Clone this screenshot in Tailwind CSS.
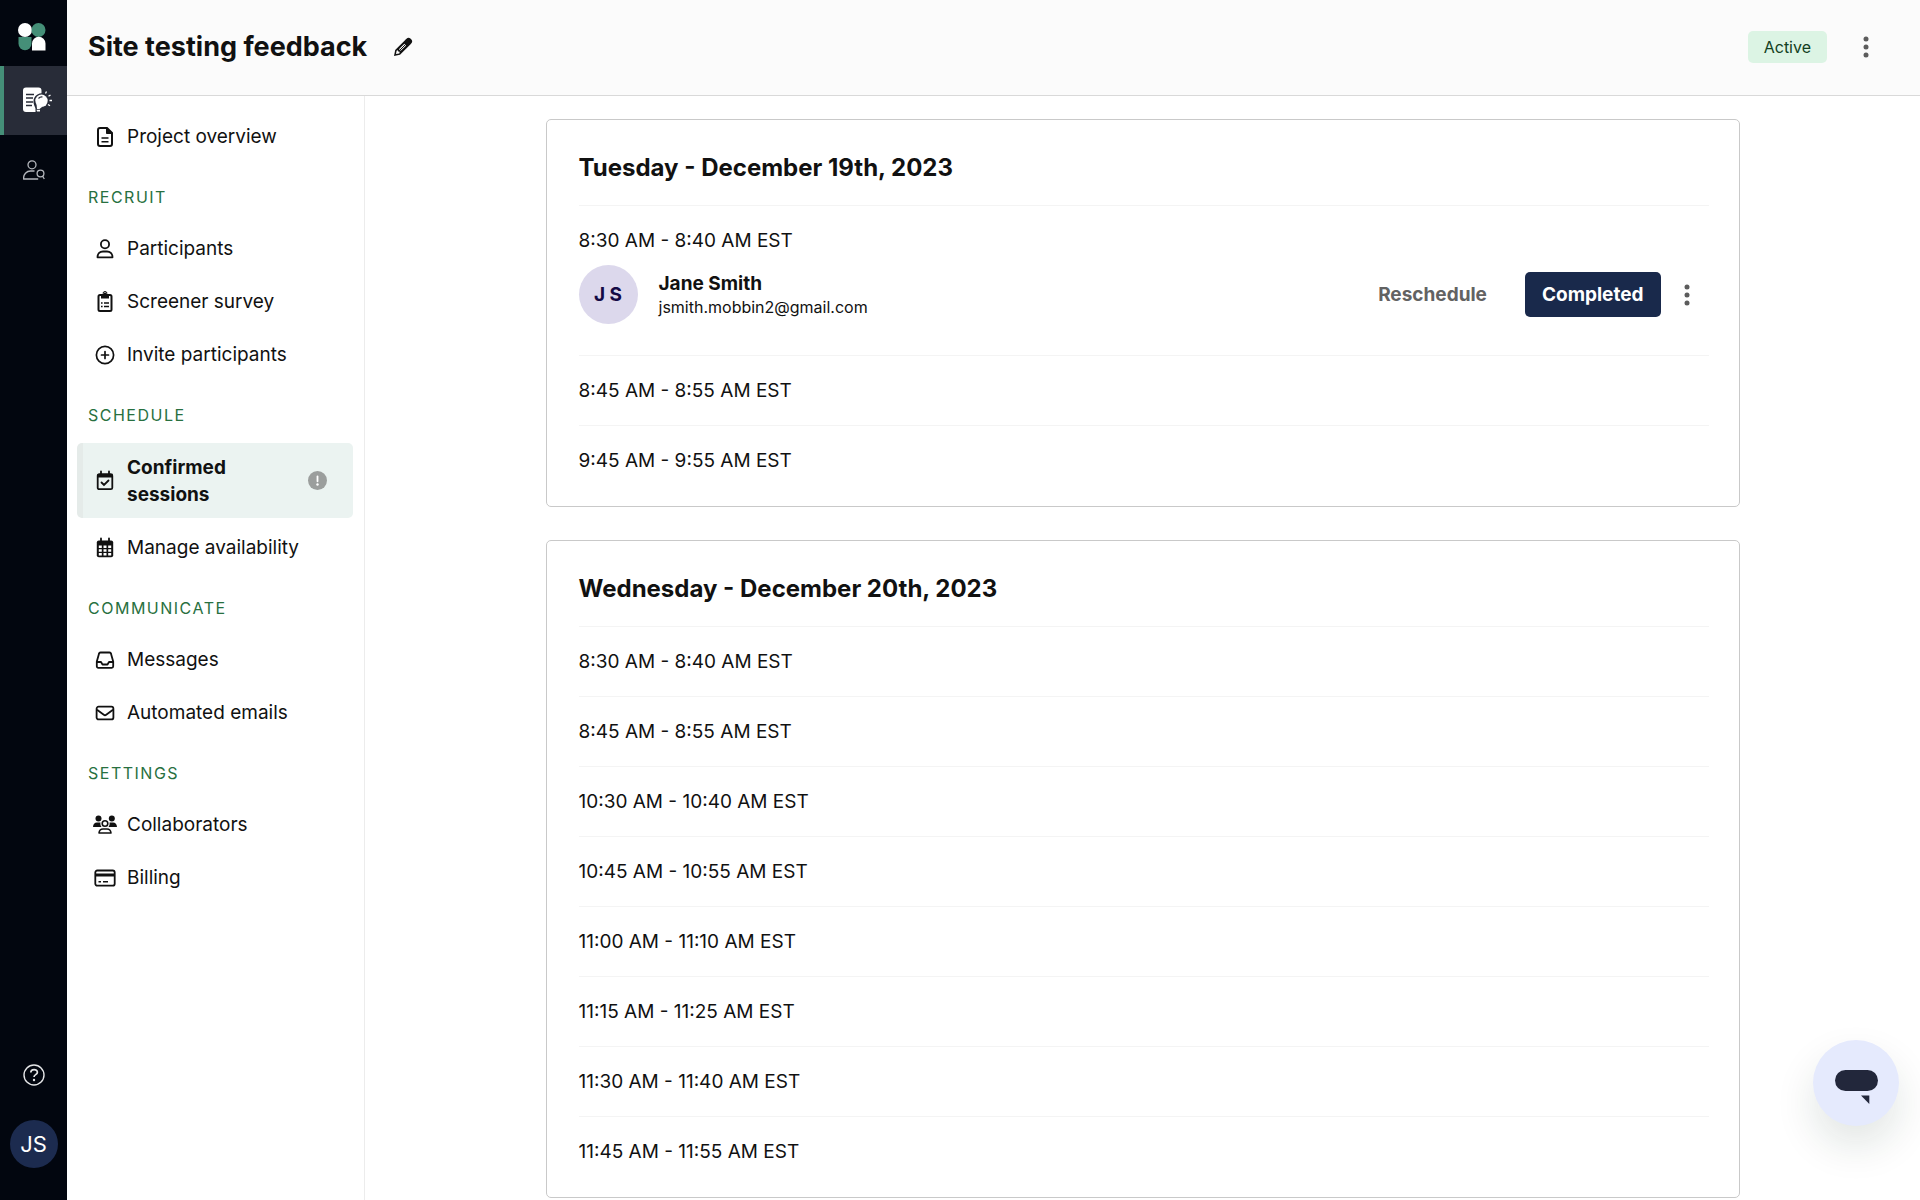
<!DOCTYPE html>
<html lang="en">
    <head>
        <meta charset="UTF-8" />
        <meta name="viewport" content="width=device-width, initial-scale=1.0" />
        <title>Site testing feedback</title>
        <script src="https://cdn.jsdelivr.net/npm/@tailwindcss/browser@4"></script>
    </head>
    <body class="flex h-screen overflow-hidden bg-white font-['Inter','Liberation_Sans',sans-serif] text-[19px] leading-[27px] text-[#111]">
        <!-- App rail -->
        <nav class="flex w-[67px] shrink-0 flex-col bg-[#02060f]" aria-label="Main">
            <a href="#" class="flex h-[66px] items-center justify-center pt-2 pr-1" aria-label="Home">
                <svg class="size-7" viewBox="0 0 28 28">
                    <circle cx="7" cy="7" r="7" fill="#fff" />
                    <circle cx="20.5" cy="7" r="7" fill="#458f78" />
                    <path d="M.5 14h13v6.500a6.500 6.800 0 0 1-13 0z" fill="#458f78" />
                    <path d="M14 27.500v-7a6.700 6.700 0 0 1 13.500 0v7z" fill="#fff" />
                </svg>
            </a>
            <a href="#" class="flex h-[69px] items-center border-l-4 border-[#458f78] bg-[#282c38] pb-[2px] pl-[19px] text-white" aria-label="Projects">
                <svg class="h-[26px] w-[29px] shrink-0" viewBox="0 0 29 26" fill="none">
                    <path d="M3 .5h12.500a3 3 0 0 1 3 3V25H3a3 3 0 0 1-3-3V3.500a3 3 0 0 1 3-3z" fill="#fff" />
                    <path d="M3 7.500h8M3 11h7M3 15h7M3 18.500h6" stroke="#282c38" stroke-width="1.300" />
                    <path d="M12.500 25v-3c0-2-2-3.500-2-7.500a8 8 0 0 1 12-7V22l-4 4z" fill="#282c38" />
                    <circle cx="18.500" cy="13.800" r="6.200" fill="#fff" />
                    <path d="M13.500 17l5.500 3-2.500 2h-2.500z" fill="#fff" />
                    <path d="M13.500 22.800h3.500v1.700h-3z" fill="#fff" />
                    <path d="M15.500 11.500a4.500 4.500 0 0 1 4-1.500" stroke="#282c38" stroke-width="1.200" />
                    <path d="M22.500 6.500l1-2M25.500 9.300l2-1.300M26.500 13.500h2.500M25 17.500l2 1.300" stroke="#fff" stroke-width="1.300" />
                </svg>
            </a>
            <a href="#" class="flex h-[70px] items-center justify-center text-[#b4b7bd]" aria-label="People">
                <svg class="h-5 w-[22px]" viewBox="0 0 22 20" fill="none" stroke="currentColor" stroke-width="1.300">
                    <circle cx="9" cy="4.800" r="4" />
                    <path d="M11.500 11H8a7 7 0 0 0-7.300 8h14.500" />
                    <circle cx="17.500" cy="13.500" r="3.400" />
                    <path d="M19.500 16l1.800 3" />
                </svg>
            </a>
            <a href="#" class="mt-auto flex h-6 items-center justify-center text-[#e4e5e7]" aria-label="Help">
                <svg class="size-[22px]" viewBox="0 0 22 22" fill="none" stroke="currentColor" stroke-width="1.400">
                    <circle cx="11" cy="11" r="10" />
                    <path d="M7.800 8.500c0-4 6.600-3.800 6.600-.3 0 2.600-3.400 2.300-3.400 4.800" stroke-width="1.700" />
                    <circle cx="11" cy="16" r="1.200" fill="currentColor" stroke="none" />
                </svg>
            </a>
            <button class="mx-auto mt-[33px] mb-8 size-12 rounded-full bg-[#1c2b4f] text-[22px] text-white">JS</button>
        </nav>

        <div class="flex min-w-0 grow flex-col">
            <!-- Header -->
            <header class="flex h-24 shrink-0 items-center border-b border-[#d9d9d9] bg-[#fbfbfb] pr-[43px] pb-[2px] pl-[21px]">
                <h1 class="text-[27px] leading-9 font-bold">Site testing feedback</h1>
                <button class="ml-[26px]" aria-label="Rename project">
                    <svg class="size-5" viewBox="0 0 20 20">
                        <path d="M1 19l1.200-6L12.500 2.700l4.800 4.800L7 17.800z" fill="#111" />
                        <path d="M13.500 1.800c1.200-1.300 2.700-1.300 3.900-.2l1 1c1.100 1.200 1.100 2.700-.2 3.900l-1.200 1.200-4.800-4.800z" fill="#111" />
                        <path d="M3.600 13.700l-.6 3.300 3.300-.6.400-1.600-1.500-.2-.2-1.400z" fill="#fbfbfb" />
                        <path d="M6.800 13l5.400-5.400" stroke="#fbfbfb" stroke-width="2.400" />
                        <path d="M6.900 13.100l5.600-5.600" stroke="#111" stroke-width="1" />
                    </svg>
                </button>
                <span class="ml-auto rounded-[5px] bg-[#dcf4e4] px-4 py-[3px] text-[16px] leading-[26px] text-[#134022]">Active</span>
                <button class="ml-[27px] flex w-[23px] justify-center text-[#5c5c5c]" aria-label="Project menu">
                    <svg class="h-[22px] w-[6px]" viewBox="0 0 6 22" fill="currentColor"><circle cx="3" cy="3" r="2.500" /><circle cx="3" cy="11" r="2.500" /><circle cx="3" cy="19" r="2.500" /></svg>
                </button>
            </header>

            <div class="flex min-h-0 grow">
                <!-- Project navigation -->
                <nav class="w-[298px] shrink-0 border-r border-[#ececec] pt-[17px] pr-[11px] pl-[10px]" aria-label="Project">
                    <a href="#" class="flex h-[47px] items-center pl-4">
                        <svg class="mr-[10px] size-6" viewBox="0 0 24 24" fill="none" stroke="currentColor" stroke-width="2">
                            <path d="M7 3h7l5 5v11a2 2 0 0 1-2 2H7a2 2 0 0 1-2-2V5a2 2 0 0 1 2-2z" />
                            <path d="M13.500 3v5.500H19z" fill="currentColor" stroke-width="1" />
                            <path d="M8.500 13h7M8.500 16.800h7" stroke-width="1.600" />
                        </svg>
                        Project overview
                    </a>

                    <h2 class="mt-[27px] mb-[18px] pl-[11px] text-[16px] leading-5 tracking-[1.500px] text-[#287040]">RECRUIT</h2>
                    <div class="flex flex-col gap-[6px]">
                        <a href="#" class="flex h-[47px] items-center pl-4">
                            <svg class="mr-[10px] size-6" viewBox="0 0 24 24" fill="none" stroke="currentColor" stroke-width="1.800">
                                <circle cx="12" cy="7.200" r="4.100" />
                                <path d="M4.500 20.300c0-3.800 2.500-5.800 5.500-5.800h4c3 0 5.500 2 5.500 5.800z" stroke-linejoin="round" />
                            </svg>
                            Participants
                        </a>
                        <a href="#" class="flex h-[47px] items-center pl-4">
                            <svg class="mr-[10px] size-6" viewBox="0 0 24 24" fill="none" stroke="currentColor" stroke-width="2">
                                <rect x="5.500" y="5" width="13" height="16" rx="1.500" />
                                <path d="M8 4.500h2a2 2 0 0 1 4 0h2v4H8z" fill="currentColor" stroke="none" />
                                <path d="M10 3.500a2 2 0 0 1 4 0" stroke-width="1" />
                                <path d="M8 13h1.600M11 13h5M8 16.500h1.600M11 16.500h5" stroke-width="1.400" />
                            </svg>
                            Screener survey
                        </a>
                        <a href="#" class="flex h-[47px] items-center pl-4">
                            <svg class="mr-[10px] size-6" viewBox="0 0 24 24" fill="none" stroke="currentColor" stroke-width="1.700" stroke-linecap="round">
                                <circle cx="12" cy="12" r="8.600" />
                                <path d="M12 8.500v7M8.500 12h7" />
                            </svg>
                            Invite participants
                        </a>
                    </div>

                    <h2 class="mt-[27px] mb-[18px] pl-[11px] text-[16px] leading-5 tracking-[1.500px] text-[#287040]">SCHEDULE</h2>
                    <div class="flex flex-col gap-[6px]">
                        <a href="#" class="flex min-h-[75px] items-center rounded-[5px] border-l-[6px] border-[#e5ebe9] bg-[#ebf3f1] py-[10px] pr-[26px] pl-[10px] font-bold" aria-current="page">
                            <svg class="mr-[10px] size-6 shrink-0" viewBox="0 0 24 24" fill="none" stroke="currentColor" stroke-width="1.800">
                                <rect x="4.700" y="5.200" width="14.600" height="15" rx="1.500" />
                                <path d="M4.500 5h15v3.500h-15z" fill="currentColor" stroke="none" />
                                <path d="M8 2.500V6M16 2.500V6M8.500 13.500l2.500 2.500 4.500-4.500" stroke-linecap="round" />
                            </svg>
                            <span class="w-[130px]">Confirmed sessions</span>
                            <svg class="ml-auto size-[19px] shrink-0" viewBox="0 0 19 19">
                                <circle cx="9.500" cy="9.500" r="9.500" fill="#9b9e9d" />
                                <path d="M9.500 5.500v4.800" stroke="#fff" stroke-width="1.800" stroke-linecap="round" />
                                <circle cx="9.500" cy="13.500" r="1.200" fill="#fff" />
                            </svg>
                        </a>
                        <a href="#" class="flex h-[47px] items-center pl-4">
                            <svg class="mr-[10px] size-6" viewBox="0 0 24 24">
                                <rect x="3.800" y="4.500" width="16.400" height="16.800" rx="2" fill="currentColor" />
                                <path d="M8 2.500V6M16 2.500V6" stroke="currentColor" stroke-width="1.800" stroke-linecap="round" />
                                <path d="M5.800 9.500h3v2.400h-3zM10.500 9.500h3v2.400h-3zM15.200 9.500h3v2.400h-3zM5.800 13.300h3v2.400h-3zM10.500 13.300h3v2.400h-3zM15.200 13.300h3v2.400h-3zM5.800 17.100h3v2.400h-3zM10.500 17.100h3v2.400h-3zM15.200 17.100h3v2.400h-3z" fill="#fff" />
                            </svg>
                            Manage availability
                        </a>
                    </div>

                    <h2 class="mt-[27px] mb-[18px] pl-[11px] text-[16px] leading-5 tracking-[1.500px] text-[#287040]">COMMUNICATE</h2>
                    <div class="flex flex-col gap-[6px]">
                        <a href="#" class="flex h-[47px] items-center pl-4">
                            <svg class="mr-[10px] size-6" viewBox="0 0 24 24" fill="none" stroke="currentColor" stroke-width="1.800" stroke-linejoin="round">
                                <path d="M3.800 13.500L6 5.800a1.500 1.500 0 0 1 1.500-1.300h9A1.500 1.500 0 0 1 18 5.800l2.200 7.700v4.800a1.500 1.500 0 0 1-1.500 1.500H5.300a1.500 1.500 0 0 1-1.500-1.500z" />
                                <path d="M3.800 14H8l1.500 2.500h5L16 14h4.200" />
                            </svg>
                            Messages
                        </a>
                        <a href="#" class="flex h-[47px] items-center pl-4">
                            <svg class="mr-[10px] size-6" viewBox="0 0 24 24" fill="none" stroke="currentColor" stroke-width="1.800" stroke-linejoin="round">
                                <rect x="3.600" y="5.700" width="16.800" height="12.700" rx="2" />
                                <path d="M4 8.800l6.800 5a2 2 0 0 0 2.400 0l6.800-5" />
                            </svg>
                            Automated emails
                        </a>
                    </div>

                    <h2 class="mt-[27px] mb-[18px] pl-[11px] text-[16px] leading-5 tracking-[1.500px] text-[#287040]">SETTINGS</h2>
                    <div class="flex flex-col gap-[6px]">
                        <a href="#" class="flex h-[47px] items-center pl-4">
                            <svg class="mr-[10px] size-6" viewBox="0 0 24 24" fill="currentColor">
                                <circle cx="5.500" cy="5.500" r="3" />
                                <circle cx="18.800" cy="5.500" r="3" />
                                <path d="M0 14c.2-3 1.500-4.500 4-4.500h3.500c-.4 1.800.1 3.300 1 4.500zM24 14c-.2-3-1.500-4.500-4-4.500h-3.500c.4 1.800-.1 3.300-1 4.500z" />
                                <circle cx="12" cy="10.500" r="2.800" fill="none" stroke="currentColor" stroke-width="1.600" />
                                <path d="M6 20c.3-2.800 1.700-4 4-4h4c2.300 0 3.700 1.200 4 4z" fill="none" stroke="currentColor" stroke-width="1.600" stroke-linejoin="round" />
                            </svg>
                            Collaborators
                        </a>
                        <a href="#" class="flex h-[47px] items-center pl-4">
                            <svg class="mr-[10px] size-6" viewBox="0 0 24 24" fill="none" stroke="currentColor" stroke-width="1.800">
                                <rect x="2.300" y="4.500" width="19.400" height="15.200" rx="2" />
                                <path d="M2.300 9h19.400" stroke-width="3" />
                                <path d="M5.500 15.800h2.500M10 15.800h5" stroke-width="1.600" />
                            </svg>
                            Billing
                        </a>
                    </div>
                </nav>

                <!-- Sessions -->
                <main class="grow overflow-hidden px-8 pt-[23px]">
                    <div class="mx-auto flex max-w-[1194px] flex-col gap-[33px]">
                        <section class="rounded-[5px] border border-[#c9c9c9] pr-[30px] pb-[11px] pl-8">
                            <h2 class="pt-8 pb-[21px] text-[24px] leading-8 font-bold">Tuesday - December 19th, 2023</h2>
                            <ul class="divide-y divide-[#f4f4f4] border-t border-[#f4f4f4]">
                                <li class="pt-[21px] pb-[31px]">
                                    8:30 AM - 8:40 AM EST
                                    <div class="mt-[11px] flex items-center">
                                        <span class="flex size-[59px] items-center justify-center rounded-full bg-[#dcd8ec] font-bold text-[#140a45]">J S</span>
                                        <div class="ml-[21px] pt-[2px]">
                                            <p class="leading-[22px] font-bold">Jane Smith</p>
                                            <p class="text-[16px] leading-6">jsmith.mobbin2@gmail.com</p>
                                        </div>
                                        <button class="ml-auto font-bold text-[#626262]">Reschedule</button>
                                        <button class="ml-[38px] rounded-[5px] bg-[#19294b] px-[17px] py-[9px] font-bold text-white">Completed</button>
                                        <button class="mr-[11px] ml-[15px] flex w-[22px] justify-center text-[#5c5c5c]" aria-label="Session menu">
                                            <svg class="h-[22px] w-[6px]" viewBox="0 0 6 22" fill="currentColor"><circle cx="3" cy="3" r="2.500" /><circle cx="3" cy="11" r="2.500" /><circle cx="3" cy="19" r="2.500" /></svg>
                                        </button>
                                    </div>
                                </li>
                                <li class="pt-[21px] pb-[21px]">8:45 AM - 8:55 AM EST</li>
                                <li class="pt-[21px] pb-[21px]">9:45 AM - 9:55 AM EST</li>
                            </ul>
                        </section>

                        <section class="rounded-[5px] border border-[#c9c9c9] pr-[30px] pb-[11px] pl-8">
                            <h2 class="pt-8 pb-[21px] text-[24px] leading-8 font-bold">Wednesday - December 20th, 2023</h2>
                            <ul class="divide-y divide-[#f4f4f4] border-t border-[#f4f4f4]">
                                <li class="pt-[21px] pb-[21px]">8:30 AM - 8:40 AM EST</li>
                                <li class="pt-[21px] pb-[21px]">8:45 AM - 8:55 AM EST</li>
                                <li class="pt-[21px] pb-[21px]">10:30 AM - 10:40 AM EST</li>
                                <li class="pt-[21px] pb-[21px]">10:45 AM - 10:55 AM EST</li>
                                <li class="pt-[21px] pb-[21px]">11:00 AM - 11:10 AM EST</li>
                                <li class="pt-[21px] pb-[21px]">11:15 AM - 11:25 AM EST</li>
                                <li class="pt-[21px] pb-[21px]">11:30 AM - 11:40 AM EST</li>
                                <li class="pt-[21px] pb-[21px]">11:45 AM - 11:55 AM EST</li>
                            </ul>
                        </section>
                    </div>
                </main>
            </div>
        </div>

        <!-- Chat launcher -->
        <button class="fixed right-[21px] bottom-[74px] flex size-[86px] items-center justify-center rounded-full bg-[#e5eafd] pt-2 shadow-[0_20px_40px_rgba(20,50,30,0.12)]" aria-label="Open chat">
            <svg class="h-[34px] w-[43px]" viewBox="0 0 43 34" fill="#22273b">
                <rect width="43" height="21" rx="10.500" />
                <path d="M26 25.500h8.300V34z" />
            </svg>
        </button>
    </body>
</html>
